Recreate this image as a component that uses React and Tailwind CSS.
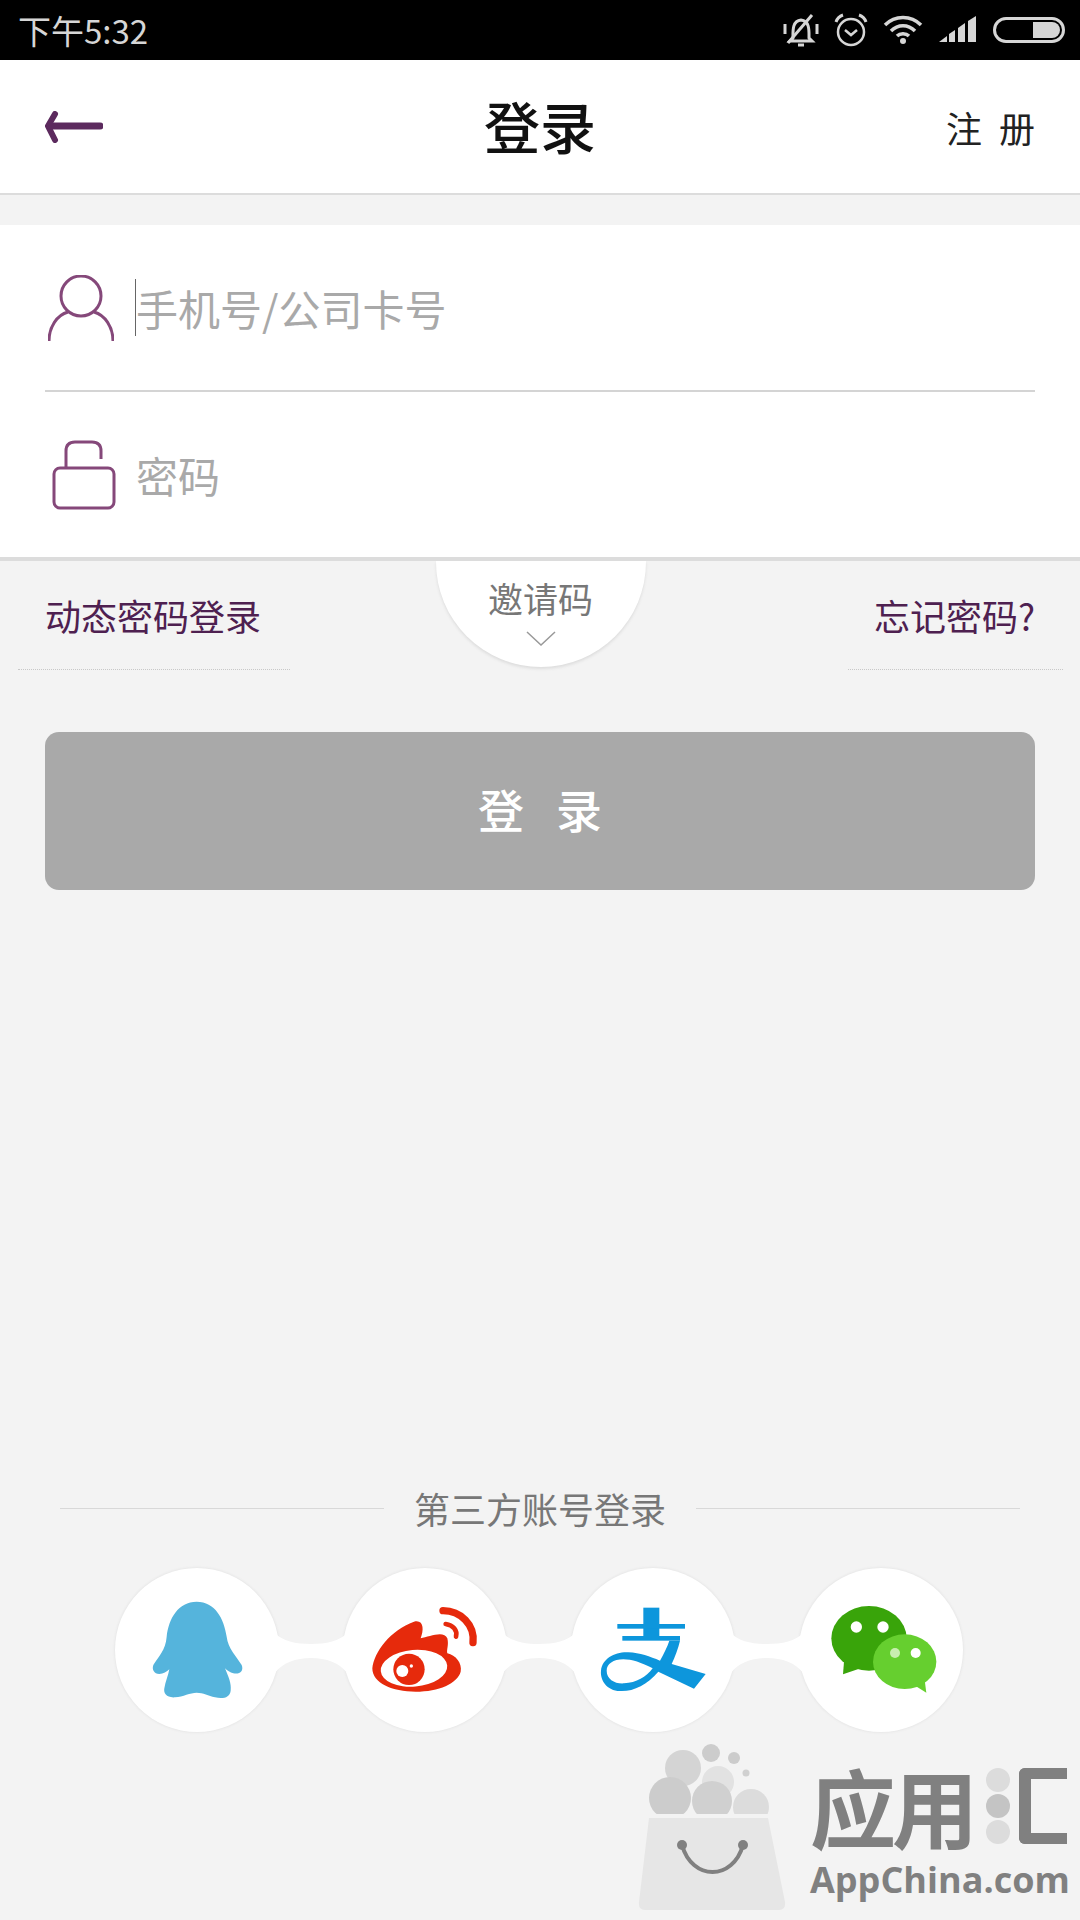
import React from 'react';

const cjk = { fontFamily: '"Noto Sans CJK SC", "Liberation Sans", sans-serif' };

function BellOff() {
    return (
        <svg width="36" height="34" viewBox="0 0 36 34" fill="none" stroke="#d6d6d6" strokeWidth="3">
            <path d="M10 25 C10 18 9 8 18 7 C27 8 26 18 26 25 L29 28 H7 Z" />
            <path d="M15 32 H21" strokeWidth="3" />
            <path d="M2 11 V21 M34 11 V21" />
            <path d="M5 30 L29 2" strokeWidth="3" />
        </svg>
    );
}

function Alarm() {
    return (
        <svg width="34" height="34" viewBox="0 0 34 34" fill="none" stroke="#d6d6d6" strokeWidth="2.5">
            <circle cx="17" cy="19" r="13" />
            <path d="M11 17 L17 22 L23 17" />
            <path d="M2 9 C3 6 6 3 9 2 M32 9 C31 6 28 3 25 2" strokeWidth="3" />
        </svg>
    );
}

function Wifi() {
    return (
        <svg width="40" height="30" viewBox="0 0 40 30" fill="none" stroke="#d6d6d6" strokeWidth="3.5">
            <path d="M2 10 C12 0 28 0 38 10" />
            <path d="M8 16 C15 9 25 9 32 16" />
            <path d="M14 21 C17 18 23 18 26 21" />
            <circle cx="20" cy="26" r="3" fill="#d6d6d6" stroke="none" />
        </svg>
    );
}

function Signal() {
    return (
        <svg width="40" height="28" viewBox="0 0 40 28" fill="#d6d6d6">
            <path d="M1 26 L9 20 V26 Z" />
            <path d="M11 18 L17 14 V26 H11 Z" />
            <path d="M20 12 L27 7 V26 H20 Z" />
            <path d="M30 5 L38 0 V26 H30 Z" />
        </svg>
    );
}

function Battery() {
    return (
        <div className="w-[72px] h-[26px] rounded-full border-[3px] border-[#d6d6d6] flex justify-end overflow-hidden p-[2px]">
            <div className="w-[27px] h-full bg-[#d6d6d6] rounded-r-full" />
        </div>
    );
}

function Connector() {
    return (
        <svg width="72" height="46" viewBox="0 0 72 46" className="relative z-10 -mx-[4px] shrink-0">
            <path d="M0 6 C7 14 21 17 36 17 C51 17 65 14 72 6 L72 46 C65 36 51 31 36 31 C21 31 7 36 0 46 Z" fill="#ffffff" />
        </svg>
    );
}

function QQ() {
    return (
        <svg viewBox="45 84 492 492" className="w-full h-full">
            <path
                d="M290 185 C345 185 372 235 380 290 C384 325 410 350 425 375 C432 392 420 404 400 400 C390 398 382 392 375 385 C385 410 395 430 392 452 C390 472 370 478 345 472 C325 467 310 458 290 458 C270 458 250 470 225 472 C200 474 190 460 193 445 C196 425 205 405 208 388 C200 395 190 402 178 402 C162 402 155 388 160 375 C175 350 197 330 200 290 C206 235 235 185 290 185 Z"
                fill="#55b4dc"
            />
        </svg>
    );
}

function Weibo() {
    return (
        <svg viewBox="732 84 492 492" className="w-full h-full">
            <path
                d="M820 385 C825 335 875 270 945 245 C975 238 975 270 965 295 C990 290 1035 270 1045 295 C1050 315 1042 330 1045 340 C1070 345 1090 370 1085 395 C1075 430 1020 455 950 455 C880 455 820 430 820 385 Z"
                fill="#e62a0c"
            />
            <ellipse cx="945" cy="385" rx="100" ry="55" transform="rotate(-5 945 385)" fill="#ffffff" />
            <circle cx="930" cy="388" r="47" fill="#e62a0c" />
            <circle cx="910" cy="393" r="18" fill="#ffffff" />
            <circle cx="937" cy="378" r="5" fill="#ffffff" />
            <path d="M1032 212 C1085 212 1128 255 1122 308" fill="none" stroke="#e62a0c" strokeWidth="22" strokeLinecap="round" />
            <path d="M1040 252 C1062 255 1076 270 1071 290" fill="none" stroke="#e62a0c" strokeWidth="14" strokeLinecap="round" />
        </svg>
    );
}

function Alipay() {
    return (
        <svg viewBox="93 84 492 492" className="w-full h-full" fill="#0d96dc">
            <rect x="310" y="203" width="48" height="90" />
            <rect x="232" y="252" width="203" height="14" />
            <rect x="247" y="288" width="173" height="14" />
            <path
                fillRule="evenodd"
                d="M497 402 L462 446 L355 395 C320 435 280 455 240 453 C200 452 180 420 183 392 C187 355 225 335 265 337 C300 338 330 350 360 362 C372 340 382 320 388 302 L420 302 C415 325 405 350 395 372 Z M338 385 C305 368 275 358 250 358 C220 358 200 372 200 392 C200 418 225 432 252 430 C290 428 318 412 338 385 Z"
            />
        </svg>
    );
}

function WeChat() {
    return (
        <svg viewBox="780 84 492 492" className="w-full h-full">
            <path d="M915 365 L912 403 L965 385 Z" fill="#39a40a" />
            <ellipse cx="990" cy="295" rx="113" ry="97" fill="#39a40a" />
            <circle cx="952" cy="261" r="17" fill="#ffffff" />
            <circle cx="1032" cy="261" r="17" fill="#ffffff" />
            <path d="M1125 435 L1162 458 L1157 420 Z" fill="#66cf2f" />
            <ellipse cx="1097" cy="365" rx="95" ry="82" fill="#66cf2f" />
            <circle cx="1068" cy="339" r="15" fill="#c8eeb0" />
            <circle cx="1130" cy="339" r="15" fill="#ffffff" />
        </svg>
    );
}

function Bag() {
    return (
        <svg width="190" height="190" viewBox="0 0 190 190">
            <circle cx="63" cy="38" r="18" fill="#d4d4d4" />
            <circle cx="91" cy="23" r="9" fill="#cccccc" />
            <circle cx="114" cy="28" r="6" fill="#cccccc" />
            <circle cx="126" cy="43" r="3.5" fill="#d0d0d0" />
            <circle cx="98" cy="52" r="16" fill="#e2e2e2" />
            <circle cx="50" cy="68" r="21" fill="#cccccc" />
            <circle cx="92" cy="71" r="20" fill="#d0d0d0" />
            <circle cx="131" cy="77" r="18" fill="#dcdcdc" />
            <rect x="0" y="84" width="190" height="106" fill="#f3f3f3" />
            <path d="M29 88 H148 L165 172 Q166 180 158 180 H26 Q18 180 19 172 Z" fill="#e6e6e6" />
            <path d="M62 115 C72 151 113 151 123 115" fill="none" stroke="#808080" strokeWidth="4" />
            <circle cx="62" cy="115" r="5" fill="#808080" />
            <circle cx="123" cy="115" r="5" fill="#808080" />
        </svg>
    );
}

export default function App() {
    return (
        <div className="relative w-[1080px] h-[1920px] bg-[#f3f3f3] overflow-hidden" style={cjk}>
            {/* status bar */}
            <div className="h-[60px] bg-black flex items-center justify-between pl-[18px] pr-[15px]">
                <span className="text-[33px] leading-none text-[#d6d6d6]">下午5:32</span>
                <div className="flex items-center gap-[15px]">
                    <BellOff />
                    <Alarm />
                    <Wifi />
                    <Signal />
                    <Battery />
                </div>
            </div>

            {/* header */}
            <div className="h-[135px] bg-white border-b-2 border-[#dcdcdc] grid grid-cols-3 items-center px-[45px]">
                <svg width="58" height="32" viewBox="0 0 58 32" fill="none" stroke="#5c2a5e" strokeLinecap="round">
                    <path d="M10 3 L3 15 L10 29" strokeWidth="6" />
                    <path d="M5 15 H55" strokeWidth="7" />
                </svg>
                <div className="text-center text-[56px] leading-none font-medium text-[#111] pb-[4px]">登录</div>
                <div className="flex justify-end gap-[17px] text-[36px] leading-none text-[#222]">
                    <span>注</span>
                    <span>册</span>
                </div>
            </div>

            {/* form */}
            <div className="mt-[30px] bg-white border-b-4 border-[#dcdcdc] px-[45px]">
                <div className="h-[167px] flex items-center border-b-2 border-[#d4d4d4]">
                    <div className="w-[90px] pl-[3px]">
                        <svg width="66" height="66" viewBox="0 0 66 66" fill="none" stroke="#85487a" strokeWidth="3">
                            <circle cx="33" cy="21" r="20" />
                            <path d="M1 66 C1 52 9 40 20 37 M65 66 C65 52 57 40 46 37" />
                        </svg>
                    </div>
                    <div className="w-[1px] h-[57px] bg-[#666]" />
                    <span className="text-[42px] leading-none text-[#a9a9a9]">手机号/公司卡号</span>
                </div>
                <div className="h-[165px] flex items-center">
                    <div className="w-[91px] pl-[7px]">
                        <svg width="64" height="70" viewBox="0 0 64 70" fill="none" stroke="#85487a" strokeWidth="3">
                            <rect x="2" y="28" width="60" height="40" rx="6" />
                            <path d="M14 28 V11 Q14 2 23 2 H40 Q49 2 49 11 V19" />
                        </svg>
                    </div>
                    <span className="text-[42px] leading-none text-[#a9a9a9]">密码</span>
                </div>
            </div>

            {/* links + invite code */}
            <div className="grid grid-cols-[1fr_210px_1fr] pl-[18px] pr-[17px]">
                <div className="w-[272px] h-[109px] flex items-center pl-[27px] border-b border-dotted border-[#c8c8c8]">
                    <span className="text-[36px] leading-none text-[#4e2050]">动态密码登录</span>
                </div>
                <div className="w-[210px] h-[106px] bg-white rounded-b-full shadow-[0_2px_3px_#dddddd] flex flex-col items-center pt-[19px]">
                    <span className="text-[35px] leading-none text-[#777]">邀请码</span>
                    <svg width="30" height="15" viewBox="0 0 30 15" fill="none" stroke="#999" strokeWidth="1.5" className="mt-[16px]">
                        <path d="M1 1 L15 14 L29 1" />
                    </svg>
                </div>
                <div className="w-[215px] h-[109px] justify-self-end flex items-center justify-end pr-[28px] border-b border-dotted border-[#c8c8c8]">
                    <span className="text-[36px] leading-none text-[#4e2050]">忘记密码?</span>
                </div>
            </div>

            {/* login button */}
            <div className="mt-[62px] mx-[45px] h-[158px] rounded-[14px] bg-[#a9a9a9] flex items-center justify-center gap-[32px] text-[46px] leading-none font-medium text-white pb-[6px]">
                <span>登</span>
                <span>录</span>
            </div>

            {/* third party */}
            <div className="mt-[598px] h-[40px] flex items-center gap-[30px] px-[60px]">
                <div className="flex-1 h-[1px] bg-[#d8d8d8]" />
                <span className="text-[36px] leading-none text-[#777]">第三方账号登录</span>
                <div className="flex-1 h-[1px] bg-[#d8d8d8]" />
            </div>
            <div className="mt-[40px] flex items-center pl-[115px]">
                <div className="w-[164px] h-[164px] rounded-full bg-white shadow-[0_0_3px_#dddddd]"><QQ /></div>
                <Connector />
                <div className="w-[164px] h-[164px] rounded-full bg-white shadow-[0_0_3px_#dddddd]"><Weibo /></div>
                <Connector />
                <div className="w-[164px] h-[164px] rounded-full bg-white shadow-[0_0_3px_#dddddd]"><Alipay /></div>
                <Connector />
                <div className="w-[164px] h-[164px] rounded-full bg-white shadow-[0_0_3px_#dddddd]"><WeChat /></div>
            </div>

            {/* watermark */}
            <div className="absolute left-[620px] top-[1730px] flex">
                <Bag />
                <div className="pt-[32px]">
                    <div className="flex items-center h-[88px]">
                        <span className="text-[86px] leading-none font-bold text-[#808080] tracking-[-4px]">应用</span>
                        <div className="ml-[12px] flex flex-col gap-[2px]">
                            <div className="w-[24px] h-[24px] rounded-full bg-[#dcdcdc]" />
                            <div className="w-[24px] h-[24px] rounded-full bg-[#c4c4c4]" />
                            <div className="w-[24px] h-[24px] rounded-full bg-[#dcdcdc]" />
                        </div>
                        <div className="ml-[9px] w-[48px] h-[76px] border-l-[12px] border-y-[11px] border-[#808080] rounded-l-[6px]" />
                    </div>
                    <div className="mt-[12px] text-[36px] leading-[36px] font-bold text-[#808080]" style={{ fontFamily: '"Open Sans", sans-serif' }}>AppChina.com</div>
                </div>
            </div>
        </div>
    );
}
